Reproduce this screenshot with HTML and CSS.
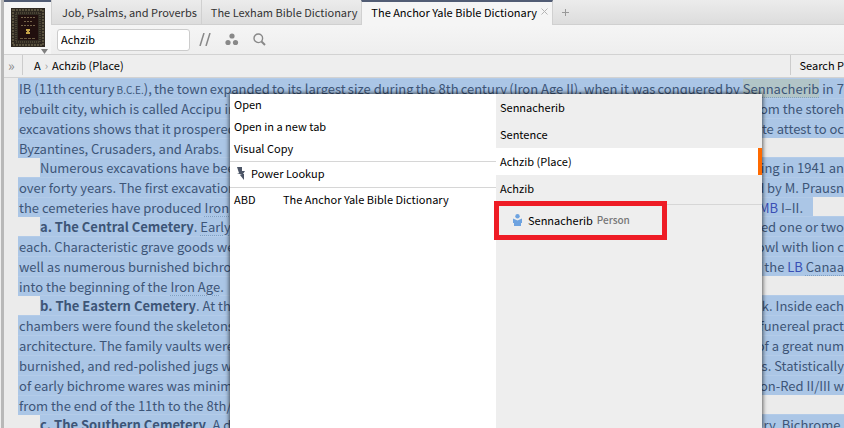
FILE: index.html
```
<!DOCTYPE html>
<html lang="en">
<head>
  <meta charset="UTF-8" />
  <meta name="viewport" content="width=device-width, initial-scale=1.0" />
  <title>The Anchor Yale Bible Dictionary</title>
  <link rel="stylesheet" href="styles.css">
</head>
<body>
  <div class="edge"></div>
  <main class="panel">
    <header class="header">
      <button class="cover" aria-label="Resource menu">
        <svg width="34" height="39" viewBox="0 0 34 39">
          <rect width="34" height="39" fill="#2e2820"/>
          <rect x="2" y="2" width="30" height="35" fill="none" stroke="#59523f" stroke-width="2" stroke-dasharray="2 1"/>
          <rect x="5" y="5" width="24" height="29" fill="none" stroke="#4a4334" stroke-width="2" stroke-dasharray="1 1"/>
          <rect x="7" y="7" width="20" height="25" fill="#210f0e"/>
          <path d="M10 9.500h14M13 13.500h8M10 17.500h14" stroke="#75634a" stroke-dasharray="2 1"/>
          <path d="M15 21h4v2h-1v1h1v2h-4v-2h1v-1h-1z" fill="#c5a348"/>
          <path d="M9 30.500h16" stroke="#6c5c42" stroke-dasharray="3 1"/>
        </svg>
        <svg class="cover-arrow" width="7" height="5" viewBox="0 0 7 5"><path d="M0 0h7L3.500 5z" fill="#808080"/></svg>
      </button>
      <div class="header-main">
        <nav class="tabs">
          <a class="tab" href="#">Job, Psalms, and Proverbs</a>
          <a class="tab" href="#">The Lexham Bible Dictionary</a>
          <div class="tab active">
            <a href="#">The Anchor Yale Bible Dictionary</a>
            <button class="close" aria-label="Close tab">
              <svg width="7" height="7" viewBox="0 0 7 7"><path d="M.5.5l6 6M6.500.5l-6 6" stroke="#b5b5b5"/></svg>
            </button>
          </div>
          <button class="add" aria-label="New tab">
            <svg width="7" height="7" viewBox="0 0 7 7"><path d="M3.500 0v7M0 3.500h7" stroke="#999"/></svg>
          </button>
        </nav>
        <div class="toolbar">
          <input class="search" type="text" value="Achzib" aria-label="Reference" />
          <button aria-label="Parallel resources">
            <svg width="12" height="13" viewBox="0 0 12 13"><path d="M1 13L5 0M7 13L11 0" stroke="#888" stroke-width="1.500"/></svg>
          </button>
          <button aria-label="Associations">
            <svg width="14" height="13" viewBox="0 0 14 13" fill="#888"><circle cx="7" cy="3" r="2.600"/><circle cx="3" cy="9.500" r="2.600"/><circle cx="10.500" cy="9.500" r="2.600"/></svg>
          </button>
          <button aria-label="Find">
            <svg width="13" height="13" viewBox="0 0 13 13" fill="none" stroke="#888"><circle cx="5.300" cy="5.300" r="4.300" stroke-width="1.400"/><path d="M8.500 8.500L12 12" stroke-width="2"/></svg>
          </button>
        </div>
      </div>
    </header>

    <div class="locator">
      <span class="expand">»</span>
      <a class="crumb" href="#">A</a>
      <span class="sep">›</span>
      <a class="crumb" href="#">Achzib (Place)</a>
      <div class="parallel">Search P</div>
    </div>

    <article class="article">
      <p>
        <span class="line"><span>IB (11th</span><span>century</span><span><small>B.C.E.</small>),</span><span>the town</span><span>expanded</span><span>to its largest</span><span>size during</span><span>the 8th</span><span>century</span><span>(Iron Age II),</span><span>when it was</span><span>conquered</span><span>by <mark>Sennacherib</mark> in 7</span></span>
        <span class="line"><span>rebuilt city, which is called Accipu in</span><span>from the storeh</span></span>
        <span class="line"><span>excavations shows that it prospered</span><span>te attest to oc</span></span>
        <span class="line short"><span>Byzantines, Crusaders, and Arabs.</span></span>
      </p>
      <p class="indent">
        <span class="line"><span>Numerous excavations have been</span><span>ing in 1941 an</span></span>
        <span class="line"><span>over forty years. The first excavation</span><span>d by M. Prausn</span></span>
        <span class="line end"><span>the cemeteries have produced <u>Iron</u></span><span class="tail"><a href="#">MB</a> I–II.</span></span>
      </p>
      <p class="indent">
        <span class="line"><span><b>a. The Central Cemetery</b>. <u>Early</u></span><span>ned one or two</span></span>
        <span class="line"><span>each. Characteristic grave goods we</span><span>bowl with lion c</span></span>
        <span class="line"><span>well as numerous burnished bichro</span><span>of the <a href="#">LB</a> <u>Canaa</u></span></span>
        <span class="line short"><span>into the beginning of the <u>Iron Age</u>.</span></span>
      </p>
      <p class="indent">
        <span class="line"><span><b>b. The Eastern Cemetery</b>. At th</span><span>k. Inside each</span></span>
        <span class="line"><span>chambers were found the skeletons</span><span>funereal pract</span></span>
        <span class="line"><span>architecture. The family vaults were</span><span>of a great num</span></span>
        <span class="line"><span>burnished, and red-polished jugs w</span><span>es. Statistically</span></span>
        <span class="line"><span>of early bichrome wares was minim</span><span>on-Red II/III w</span></span>
        <span class="line short"><span>from the end of the 11th to the 8th/</span></span>
      </p>
      <p class="indent">
        <span class="line"><span><b>c. The Southern Cemetery</b>. A d</span><span>ry. Bichrome,</span></span>
      </p>
    </article>
  </main>

  <div class="menu">
    <div class="actions">
      <button class="action">Open</button>
      <button class="action">Open in a new tab</button>
      <button class="action">Visual Copy</button>
      <button class="action ruled">
        <svg class="bolt" width="9" height="13" viewBox="0 0 9 13"><path d="M1 0h5v4h3L7 7h1v6L4 8h2L1 6h2z" fill="#4c5566"/></svg>
        Power Lookup
      </button>
      <button class="action ruled"><span class="abbr">ABD</span>The Anchor Yale Bible Dictionary</button>
    </div>
    <div class="targets">
      <button class="target">Sennacherib</button>
      <button class="target">Sentence</button>
      <button class="target selected">Achzib (Place)</button>
      <button class="target">Achzib</button>
      <button class="target person">
        <svg width="9" height="12" viewBox="0 0 9 12" fill="#6ea3e0"><circle cx="4.500" cy="2.200" r="2.200"/><path d="M0 4.500l4.500 2L9 4.500V9H8v3H1V9H0z"/></svg>
        Sennacherib <span class="kind">Person</span>
      </button>
      <div class="highlight"></div>
    </div>
  </div>
</body>
</html>
```
FILE: styles.css
```
* {
  box-sizing: border-box;
}

body {
  margin: 0;
  height: 100vh;
  display: flex;
  position: relative;
  overflow: hidden;
  background: #ebebeb;
  color: #000;
  font-family: 'Noto Sans CJK SC', 'Noto Sans', sans-serif;
  font-size: 11px;
  line-height: 20px;
}

button {
  margin: 0;
  padding: 0;
  border: none;
  background: none;
  color: inherit;
  font: inherit;
}

a {
  color: inherit;
  text-decoration: none;
}

svg {
  display: block;
  flex: none;
}

.edge {
  flex: none;
  width: 4px;
  background: #b8b8b8;
  border-left: 1px solid #eee;
}

.panel {
  flex: 1;
  min-width: 0;
  overflow: hidden;
}

.header {
  display: flex;
  border-bottom: 1px solid #d2d2d2;
  background: #f1f1f1;
}

.cover {
  flex: none;
  width: 47px;
  padding: 5px 0 0 7px;
  border-top: 2px solid #515c74;
  background: #f5f5f5;
}

.cover-arrow {
  margin: 2px 0 0 30px;
}

.header-main {
  flex: 1;
  min-width: 0;
}

.tabs {
  display: flex;
  height: 25px;
  background: linear-gradient(#ececec, #dcdcdc);
  box-shadow: inset 0 -1px #d0d0d0;
  white-space: nowrap;
}

.tab {
  display: flex;
  align-items: center;
  padding: 0 4px 2px 9px;
  border-left: 1px solid #d0d0d0;
  color: #333;
}

.tab:first-child {
  padding-left: 10px;
}

.tab.active {
  gap: 4px;
  padding: 0 4px 4px 9px;
  border-top: 2px solid #515c74;
  border-right: 1px solid #d0d0d0;
  background: #f5f5f5;
  color: #000;
}

.add {
  padding: 0 9px;
}

.toolbar {
  display: flex;
  align-items: center;
  gap: 14px;
  height: 29px;
  padding-left: 6px;
  background: linear-gradient(#f5f5f5, #eee);
}

.search {
  width: 133px;
  height: 22px;
  margin-right: -5px;
  padding: 0 3px 2px;
  border: 1px solid #ccc;
  border-radius: 3px;
  background: #fff;
  color: #000;
  font: inherit;
}

.locator {
  display: flex;
  align-items: center;
  height: 23px;
  padding-bottom: 2px;
  border-bottom: 1px solid #d2d2d2;
  background: #eee;
  white-space: nowrap;
}

.expand {
  width: 19px;
  padding-left: 4px;
  border-right: 1px solid #ccc;
  color: #888;
  font-size: 14px;
}

.expand + .crumb {
  margin-left: 11px;
}

.sep {
  margin: 0 4px;
  color: #999;
}

.parallel {
  margin-left: auto;
  padding-left: 8px;
  border-left: 1px solid #ccc;
}

.article {
  padding-left: 14px;
  color: #3d5577;
  font-size: 13px;
  white-space: nowrap;
}

.article p {
  margin: 0;
}

.article .indent {
  margin-top: -1px;
}

.line {
  display: flex;
  justify-content: space-between;
  height: 20px;
  padding: 1px 0 0 1px;
  background: #abc6e6;
  box-shadow: inset 0 1px #b3cbe8;
}

.indent .line:first-child {
  margin-left: 22px;
  padding-left: 0;
}

.line.short {
  margin-right: 50%;
}

.line.end {
  margin-right: 31px;
}

.tail {
  padding-right: 10px;
}

.article small {
  font-size: 10px;
}

.article mark {
  background: #b2c5c7;
  color: inherit;
}

.article u,
.article mark {
  text-decoration: underline dotted 1px #7f9fc2;
  text-underline-offset: 3px;
}

.article a {
  color: #3a4fb5;
}

.menu {
  position: absolute;
  top: 94px;
  bottom: 0;
  left: 230px;
  display: grid;
  grid-template-columns: 1fr 1fr;
  width: 532px;
  background: #fff;
  box-shadow: 0 0 4px 1px rgba(0, 0, 0, 0.6);
}

.actions {
  display: flex;
  flex-direction: column;
}

.action {
  display: flex;
  align-items: center;
  height: 22px;
  padding: 0 0 3px 4px;
}

.action.ruled {
  height: 26px;
  border-top: 1px solid #d6d6d6;
}

.action:not(.ruled) + .ruled {
  margin-top: 1px;
}

.bolt {
  margin: 0 6px 0 2px;
}

.abbr {
  width: 49px;
  text-align: left;
}

.targets {
  position: relative;
  background: #eee;
}

.target {
  display: flex;
  align-items: center;
  width: 100%;
  height: 27px;
  padding: 0 0 1px 4px;
}

.target.selected {
  border-right: 4px solid #ff6a00;
  background: #fff;
}

.person {
  gap: 4px;
  height: 32px;
  margin-top: 2px;
  padding-left: 17px;
  border-top: 1px solid #d6d6d6;
}

.person svg {
  margin-right: 2px;
}

.kind {
  color: #777;
  font-size: 10px;
  font-weight: 500;
}

/* frame around the person entry */
.highlight {
  position: absolute;
  top: 107px;
  left: -2px;
  width: 173px;
  height: 39px;
  border: 5px solid #ee1c25;
}
```
